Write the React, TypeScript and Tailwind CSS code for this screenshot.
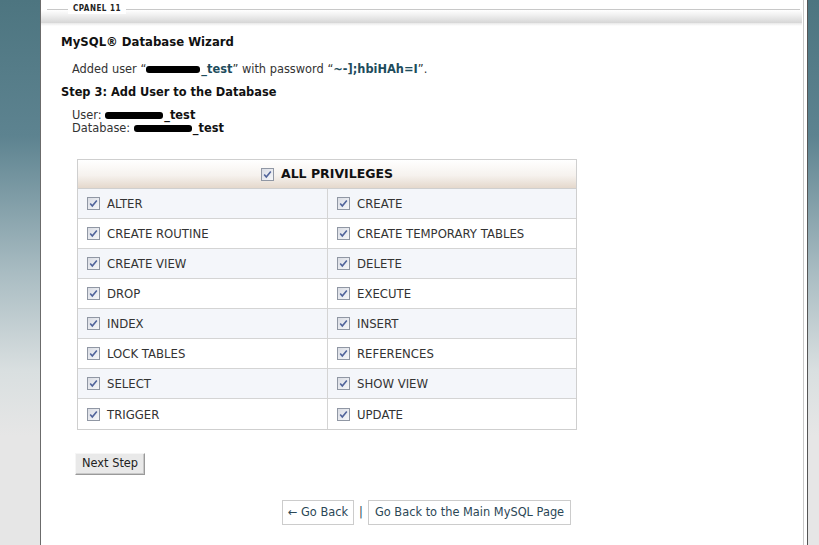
import React from "react";

const Check = () => (
  <svg width="13" height="13" viewBox="0 0 13 13" className="shrink-0">
    <defs>
      <linearGradient id="cbg" x1="0" y1="0" x2="1" y2="1">
        <stop offset="0" stopColor="#d9dce4" />
        <stop offset="1" stopColor="#f7f8fa" />
      </linearGradient>
    </defs>
    <rect x="0.5" y="0.5" width="12" height="12" fill="url(#cbg)" stroke="#9097a4" />
    <path d="M3.2 6.6 L5.3 9.1 L9.8 3.4" fill="none" stroke="#50639a" strokeWidth="1.6" />
  </svg>
);

const Blob = ({ w }: { w: number }) => (
  <span
    className="inline-block bg-black rounded-[3px] h-[7px] align-middle mr-[1px]"
    style={{ width: w }}
  />
);

const privs: [string, string][] = [
  ["ALTER", "CREATE"],
  ["CREATE ROUTINE", "CREATE TEMPORARY TABLES"],
  ["CREATE VIEW", "DELETE"],
  ["DROP", "EXECUTE"],
  ["INDEX", "INSERT"],
  ["LOCK TABLES", "REFERENCES"],
  ["SELECT", "SHOW VIEW"],
  ["TRIGGER", "UPDATE"],
];

export default function App() {
  return (
    <div
      className="flex h-[545px] w-[819px] overflow-hidden text-[#333] text-[11.4px]"
      style={{ fontFamily: '"DejaVu Sans", Verdana, sans-serif' }}
    >
      <div className="w-[40px] shrink-0 bg-[linear-gradient(to_bottom,#4d7580_0%,#5d8390_25%,#a9bcc2_50%,#d9dfe0_68%,#e6e6e6_80%,#e6e6e6_100%)]" />
      <div className="w-[1px] shrink-0 bg-[#6b6b6b]" />
      <div className="flex-1 bg-white flex flex-col">
        <div className="relative h-[26px] shrink-0">
          <div className="h-[9px]" />
          <div className="h-[1px] bg-[#c8c8c8] ml-[6px] mr-[2px]" />
          <div className="h-[13px] bg-[linear-gradient(to_bottom,#ffffff,#f0f0f0_40%,#d6d6d6)]" />
          <div className="h-[3px] bg-[linear-gradient(to_bottom,#e8e8e8,#ffffff)]" />
          <div
            className="absolute left-[27px] top-[4px] bg-white px-[5px] text-[8px] font-bold tracking-[0.5px] text-[#222] leading-[10px]"
            style={{ fontFamily: '"DejaVu Sans Condensed", "DejaVu Sans", sans-serif' }}
          >
            CPANEL 11
          </div>
        </div>
        <div className="pl-[20px] pt-[8px]">
          <div
            className="text-[13px] font-bold text-[#111] leading-[16px]"
            style={{ fontFamily: '"DejaVu Sans Condensed", "DejaVu Sans", sans-serif' }}
          >
            MySQL® Database Wizard
          </div>
          <div className="pl-[11px] mt-[12px] leading-[14px]">
            Added user “<Blob w={54} />
            <span className="font-bold text-[#1e4c5c]">_test</span>” with password “
            <span className="font-bold text-[#1e4c5c]">~-];hbiHAh=I</span>”.
          </div>
          <div className="mt-[9px] font-bold text-[#111] leading-[14px]">
            Step 3: Add User to the Database
          </div>
          <div className="pl-[11px] mt-[10px] leading-[13px]">
            <div>
              User: <Blob w={58} />
              <span className="font-bold text-[#111]">_test</span>
            </div>
            <div>
              Database: <Blob w={58} />
              <span className="font-bold text-[#111]">_test</span>
            </div>
          </div>
          <div className="ml-[16px] mt-[24px] w-[500px] border border-[#cfcfcf] text-[11.7px]">
            <div className="h-[29px] flex items-center justify-center gap-[7px] bg-[linear-gradient(to_bottom,#ffffff_0%,#f6f2ee_55%,#e4d8cc_100%)] border-b border-[#cfcfcf]">
              <Check />
              <span className="font-bold text-[12.5px] text-[#111] mt-[1px]">ALL PRIVILEGES</span>
            </div>
            {privs.map(([a, b], i) => (
              <div
                key={a}
                className={`flex h-[30px] ${i < privs.length - 1 ? "border-b border-[#d4d4d4]" : ""} ${
                  i % 2 === 0 ? "bg-[#f4f6fa]" : "bg-white"
                }`}
              >
                <div className="w-[250px] flex items-center gap-[7px] pl-[9px] border-r border-[#d4d4d4]">
                  <Check />
                  <span className="mt-[3px]">{a}</span>
                </div>
                <div className="flex-1 flex items-center gap-[7px] pl-[9px]">
                  <Check />
                  <span className="mt-[3px]">{b}</span>
                </div>
              </div>
            ))}
          </div>
          <div className="mt-[23px] ml-[14px]">
            <button className="h-[22px] px-[6px] bg-[#e9e9e9] text-[#222] text-[11.4px] border border-[#f6f6f6] border-r-[#9a9a9a] border-b-[#9a9a9a] shadow-[inset_-1px_-1px_0_#c8c8c8]">
              Next Step
            </button>
          </div>
        </div>
        <div className="flex justify-center items-center mt-[25px] pl-[10px] text-[#2b4756]">
          <div className="h-[25px] px-[5px] flex items-center border border-[#cccccc]">← Go Back</div>
          <span className="mx-[5px]">|</span>
          <div className="h-[25px] px-[6px] flex items-center border border-[#cccccc]">
            Go Back to the Main MySQL Page
          </div>
        </div>
      </div>
      <div className="w-[1px] shrink-0 bg-white" />
      <div className="w-[1px] shrink-0 bg-[#c9c9c9]" />
      <div className="w-[3px] shrink-0 bg-white" />
      <div className="w-[1px] shrink-0 bg-[#555]" />
      <div className="w-[11px] shrink-0 bg-[linear-gradient(to_bottom,#4d7580_0%,#5d8390_25%,#a9bcc2_50%,#d9dfe0_68%,#e6e6e6_80%,#e6e6e6_100%)]" />
    </div>
  );
}
